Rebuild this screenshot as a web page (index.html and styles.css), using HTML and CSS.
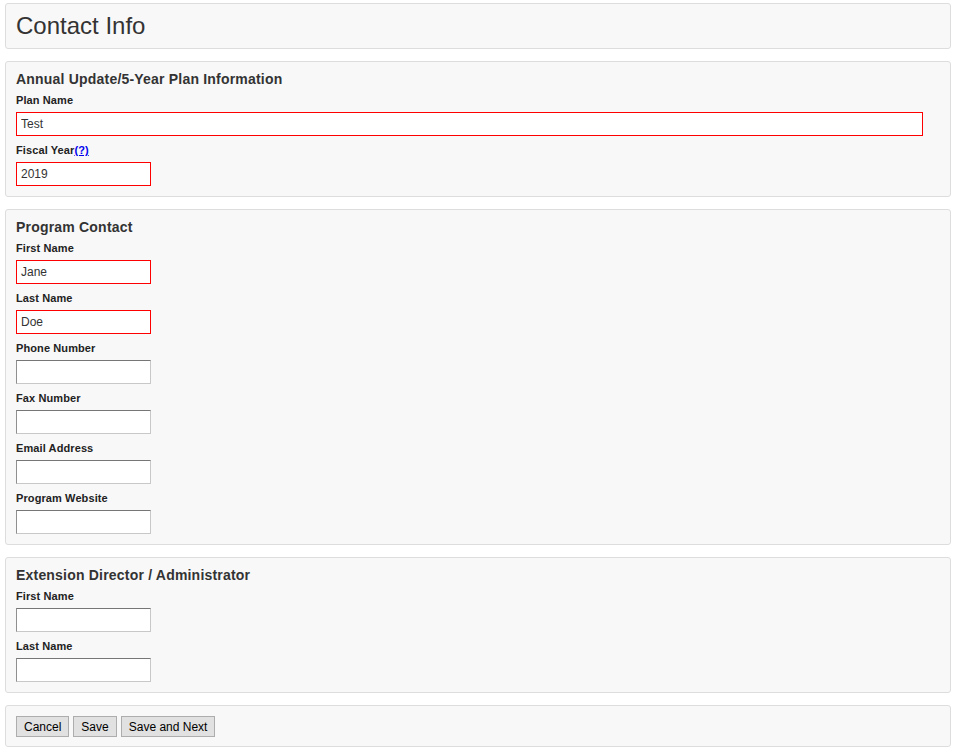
FILE: index.html
```html
<!DOCTYPE html>
<html>
<head>
<meta charset="utf-8">
<link rel="stylesheet" href="styles.css">
</head>
<body>
<div class="page">
  <div class="panel title-panel"><h1 class="title">Contact Info</h1></div>

  <div class="panel">
    <h2 class="heading">Annual Update/5-Year Plan Information</h2>
    <div class="field"><label class="label">Plan Name</label><input class="input wide invalid" value="Test"></div>
    <div class="field"><label class="label">Fiscal Year<a class="help" href="#">(?)</a></label><input class="input invalid" value="2019"></div>
  </div>

  <div class="panel">
    <h2 class="heading">Program Contact</h2>
    <div class="field"><label class="label">First Name</label><input class="input invalid" value="Jane"></div>
    <div class="field"><label class="label">Last Name</label><input class="input invalid" value="Doe"></div>
    <div class="field"><label class="label">Phone Number</label><input class="input"></div>
    <div class="field"><label class="label">Fax Number</label><input class="input"></div>
    <div class="field"><label class="label">Email Address</label><input class="input"></div>
    <div class="field"><label class="label">Program Website</label><input class="input"></div>
  </div>

  <div class="panel">
    <h2 class="heading">Extension Director / Administrator</h2>
    <div class="field"><label class="label">First Name</label><input class="input"></div>
    <div class="field"><label class="label">Last Name</label><input class="input"></div>
  </div>

  <div class="panel actions">
    <button class="btn">Cancel</button>
    <button class="btn">Save</button>
    <button class="btn">Save and Next</button>
  </div>
</div>
</body>
</html>
```

FILE: styles.css
```css
html, body {
  margin: 0;
  padding: 0;
  background: #fff;
  font-family: "Liberation Sans", Arial, sans-serif;
  color: #333;
}
.page {
  padding: 3px 6px 0 5px;
  display: flex;
  flex-direction: column;
  gap: 12px;
}
.panel {
  background: #f8f8f8;
  border: 1px solid #dddddd;
  border-radius: 3px;
  padding: 9px 10px 10px 10px;
  display: flex;
  flex-direction: column;
}
.title-panel {
  padding: 0 10px;
  justify-content: center;
  box-sizing: border-box;
  height: 46px;
}
.title {
  margin: 0;
  font-size: 24px;
  font-weight: normal;
  color: #333;
  line-height: 28px;
}
.heading {
  margin: 0 0 5px 0;
  font-size: 14px;
  font-weight: bold;
  color: #333;
  line-height: 17px;
  letter-spacing: 0.2px;
}
.field {
  display: flex;
  flex-direction: column;
  align-items: flex-start;
  margin-bottom: 7px;
}
.field:last-child {
  margin-bottom: 0;
}
.label {
  font-size: 11px;
  font-weight: bold;
  color: #222;
  line-height: 14px;
  margin-bottom: 5px;
  letter-spacing: 0.1px;
}
.help {
  color: #0000ee;
  text-decoration: underline;
}
.input {
  box-sizing: border-box;
  width: 135px;
  height: 24px;
  margin: 0;
  padding: 1px 4px;
  background: #fff;
  font-family: "Liberation Sans", Arial, sans-serif;
  font-size: 12px;
  color: #333;
  border-style: solid;
  border-width: 1px;
  border-color: #767676 #c8c8c8 #c8c8c8 #8f8f8f;
  outline: none;
}
.input.invalid {
  border: 1px solid #ff0000;
}
.input.wide {
  width: 907px;
}
.actions {
  flex-direction: row;
  gap: 4px;
  padding-top: 10px;
  padding-bottom: 9px;
}
.btn {
  box-sizing: border-box;
  height: 21px;
  padding: 0 7px;
  margin: 0;
  font-family: "Liberation Sans", Arial, sans-serif;
  font-size: 12px;
  color: #000;
  background: #e1e1e1;
  border: 1px solid #adadad;
  border-radius: 0;
}
```
